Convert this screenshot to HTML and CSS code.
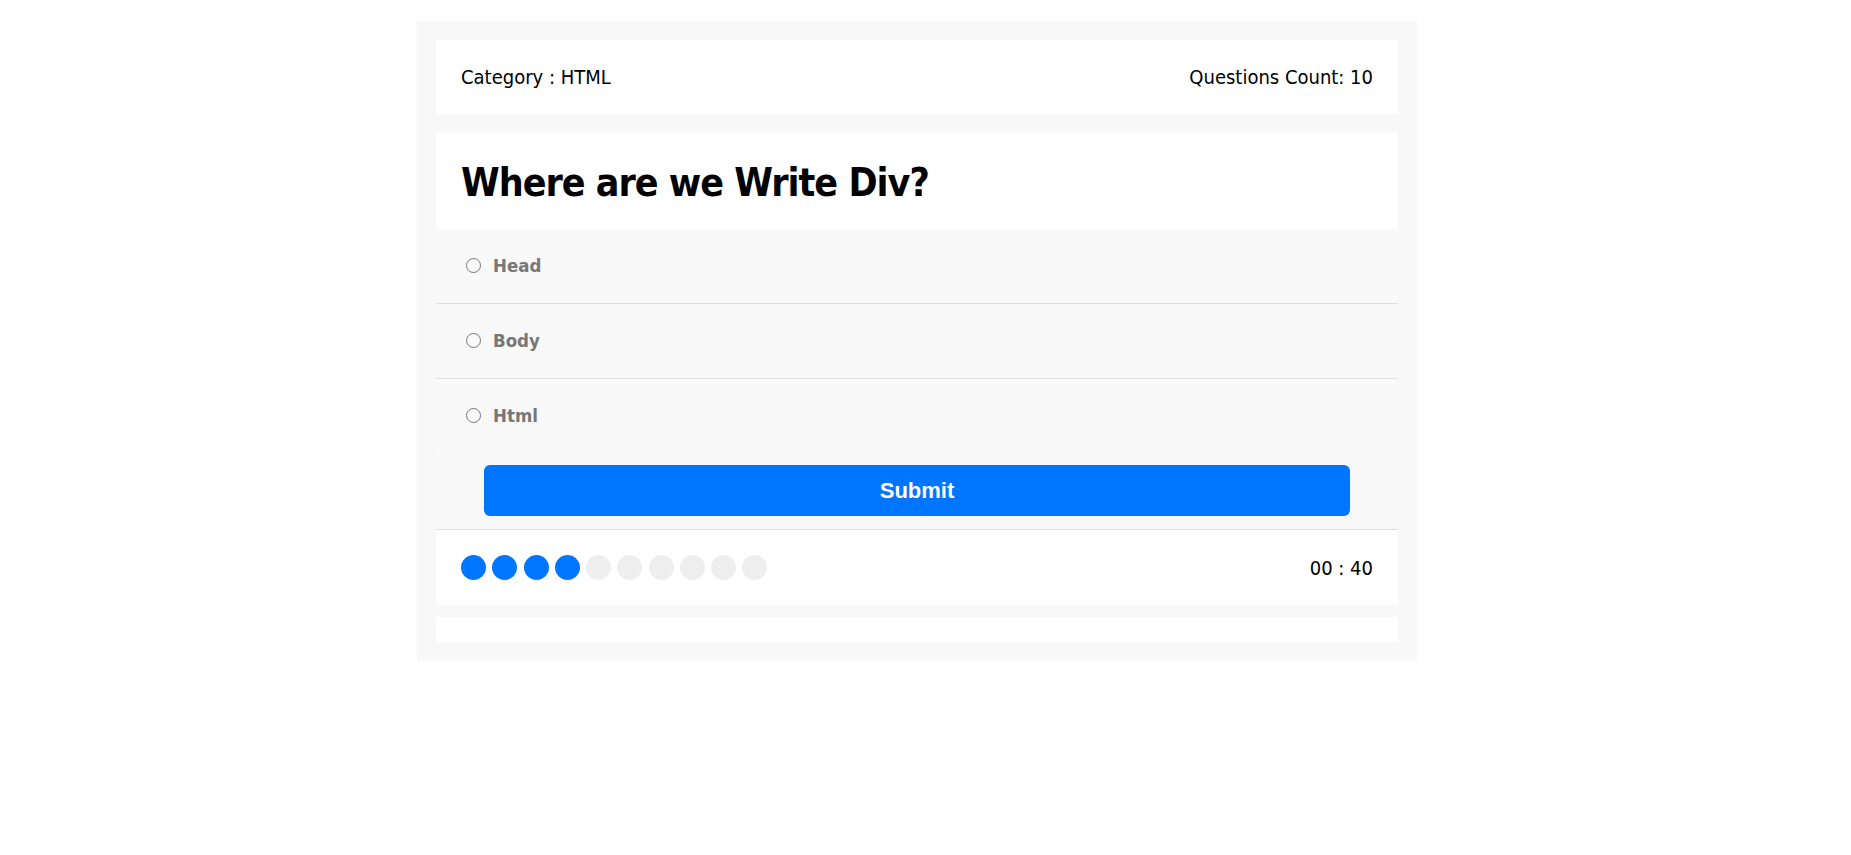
FILE: index.html
```html
<!DOCTYPE html>
<html lang="en">
<head>
<meta charset="utf-8">
<title>Quiz App</title>
<link rel="stylesheet" href="styles.css">
</head>
<body>
<div class="page">
  <div class="quiz-app">
    <div class="quiz-info">
      <div class="category">Category : <span>HTML</span></div>
      <div class="count">Questions Count: <span>10</span></div>
    </div>
    <div class="quiz-area">
      <h2>Where are we Write Div?</h2>
    </div>
    <div class="answers-area">
      <div class="answer">
        <input type="radio" name="question" id="answer_1">
        <label for="answer_1">Head</label>
      </div>
      <div class="answer">
        <input type="radio" name="question" id="answer_2">
        <label for="answer_2">Body</label>
      </div>
      <div class="answer">
        <input type="radio" name="question" id="answer_3">
        <label for="answer_3">Html</label>
      </div>
    </div>
    <button class="submit-button">Submit</button>
    <div class="bullets">
      <div class="spans">
        <span class="on"></span><span class="on"></span><span class="on"></span><span class="on"></span><span></span><span></span><span></span><span></span><span></span><span></span>
      </div>
      <div class="countdown">00 : 40</div>
    </div>
    <div class="results"></div>
  </div>
</div>
</body>
</html>
```
FILE: styles.css
```css
* {
  box-sizing: border-box;
}

body {
  margin: 0;
  background: #fff;
  font-family: "DejaVu Sans Condensed", "DejaVu Sans", sans-serif;
  color: #000;
}

.page {
  padding: 21px 17px 0 0;
}

.quiz-app {
  width: 1000px;
  margin: 0 auto;
  background-color: #f8f8f8;
  padding: 19px;
}

.quiz-info {
  display: flex;
  background-color: #fff;
  padding: 25px;
  font-size: 20px;
  line-height: 24px;
}

.quiz-info .category {
  flex: 1;
}

.quiz-info .count {
  flex: 1;
  text-align: right;
}

.quiz-area {
  background-color: #fff;
  padding: 26px 25px 22px;
  margin-top: 19px;
}

.quiz-area h2 {
  margin: 0;
  font-size: 39px;
  line-height: 48px;
  letter-spacing: -1px;
  font-weight: bold;
}

.answers-area .answer {
  box-sizing: content-box;
  display: flex;
  align-items: center;
  background-color: #f9f9f9;
  height: 72px;
  padding: 0 29px 2px 30px;
}

.answers-area .answer:not(:last-child) {
  border-bottom: 1px solid #dfdfdf;
}

.answers-area .answer input {
  appearance: none;
  -webkit-appearance: none;
  width: 15px;
  height: 15px;
  margin: 0;
  border: 1.4px solid #777;
  border-radius: 50%;
  background: transparent;
}

.answers-area .answer label {
  margin-left: 12px;
  font-size: 18.5px;
  font-weight: bold;
  color: #777;
}

.submit-button {
  display: block;
  width: 90%;
  height: 51px;
  margin: 12px auto 13px;
  padding: 0;
  border: none;
  border-radius: 6px;
  background-color: #0075ff;
  color: #fff;
  font-family: "Liberation Sans", Arial, sans-serif;
  font-size: 22px;
  font-weight: bold;
}

.bullets {
  display: flex;
  align-items: center;
  border-top: 1px solid #dfdfdf;
  background-color: #fff;
  padding: 25px;
}

.bullets .spans {
  flex: 1;
  display: flex;
}

.bullets .spans span {
  width: 25px;
  height: 25px;
  margin-right: 6.25px;
  border-radius: 50%;
  background-color: #eee;
}

.bullets .spans span.on {
  background-color: #0075ff;
}

.bullets .countdown {
  font-size: 20px;
  line-height: 24px;
}

.results {
  margin-top: 12px;
  height: 25px;
  background-color: #fff;
}
```
